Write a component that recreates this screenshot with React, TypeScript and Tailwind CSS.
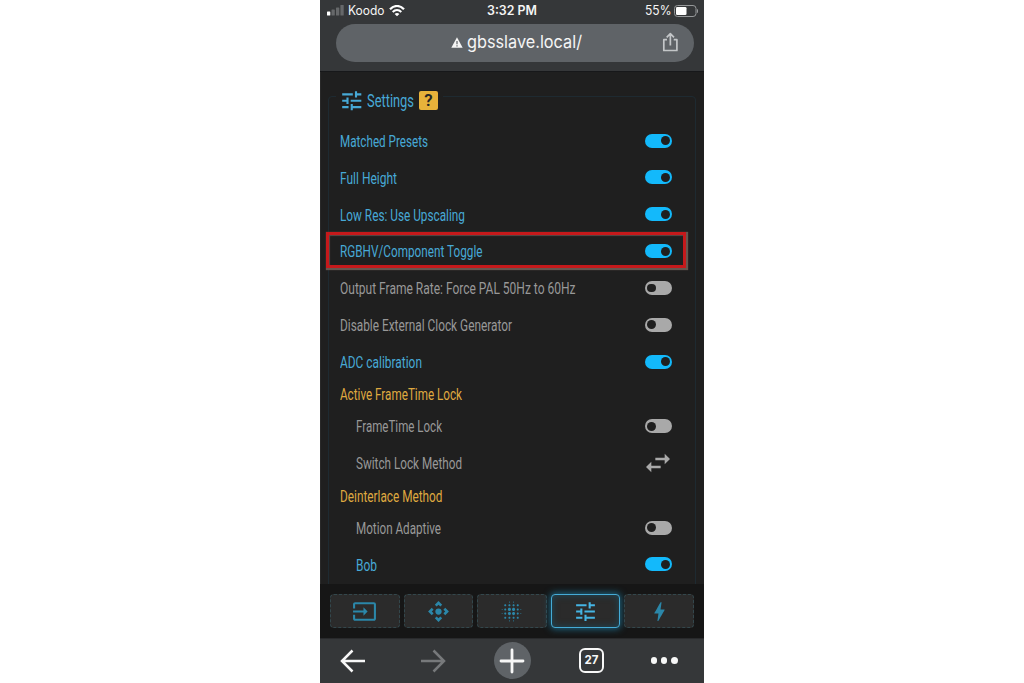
import { useLayoutEffect, useRef, useState } from "react";
import {
  MdBlurOn,
  MdBolt,
  MdInput,
  MdOutlineControlCamera,
  MdSwapHoriz,
  MdTune,
} from "react-icons/md";

/** Condenses a line of text to the given width. */
function Fit({ width, children, className = "" }: { width: number; children: string; className?: string }) {
  const ref = useRef<HTMLSpanElement>(null);
  const [scale, setScale] = useState(1);
  useLayoutEffect(() => {
    if (ref.current) setScale(width / ref.current.getBoundingClientRect().width * scale);
  }, [width]);
  return (
    <span className={`flex shrink-0 ${className}`} style={{ width }}>
      <span
        ref={ref}
        className="inline-block shrink-0 origin-left whitespace-nowrap"
        style={{ transform: `scaleX(${scale})` }}
      >
        {children}
      </span>
    </span>
  );
}

type Row = {
  label: string;
  width: number;
  kind: "on" | "off" | "swap" | "header";
  indent?: boolean;
  marked?: boolean;
};

const rows: Row[] = [
  { label: "Matched Presets", width: 88, kind: "on" },
  { label: "Full Height", width: 57, kind: "on" },
  { label: "Low Res: Use Upscaling", width: 125, kind: "on" },
  { label: "RGBHV/Component Toggle", width: 142.5, kind: "on", marked: true },
  { label: "Output Frame Rate: Force PAL 50Hz to 60Hz", width: 235.5, kind: "off" },
  { label: "Disable External Clock Generator", width: 172, kind: "off" },
  { label: "ADC calibration", width: 82, kind: "on" },
  { label: "Active FrameTime Lock", width: 122, kind: "header" },
  { label: "FrameTime Lock", width: 86, kind: "off", indent: true },
  { label: "Switch Lock Method", width: 106, kind: "swap", indent: true },
  { label: "Deinterlace Method", width: 102.5, kind: "header" },
  { label: "Motion Adaptive", width: 85, kind: "off", indent: true },
  { label: "Bob", width: 21, kind: "on", indent: true },
];

function Toggle({ on }: { on: boolean }) {
  return (
    <span
      className={`flex h-[14px] w-[27.6px] items-center rounded-full px-[2.6px] ${
        on ? "justify-end bg-[#13b9fb]" : "justify-start bg-[#a9a9a9]"
      }`}
    >
      <span className="size-[8.8px] rounded-full bg-[#1f1f1f]" />
    </span>
  );
}

function SettingRow({ row }: { row: Row }) {
  if (row.kind === "header") {
    return (
      <div className="flex h-[27.7px] shrink-0 items-center pl-[11px] text-[#dfa940]">
        <Fit width={row.width} className="pt-[2px]">{row.label}</Fit>
      </div>
    );
  }
  return (
    <div
      className={`relative flex h-[36.85px] shrink-0 items-center justify-between pr-[22.8px] ${
        row.indent ? "pl-[26.5px]" : "pl-[11px]"
      } ${row.kind === "on" ? "text-[#47a9d6]" : "text-[#989898]"}`}
    >
      <Fit width={row.width} className="pt-[2px]">{row.label}</Fit>
      {row.kind === "swap" ? (
        <MdSwapHoriz className="-mr-[2px] size-8 text-[#a9a9a9]" />
      ) : (
        <Toggle on={row.kind === "on"} />
      )}
      {row.marked && (
        <span className="absolute -top-px -left-[3px] h-[36.5px] w-[360px] border-[3px] border-[#c5191b] shadow-[1px_1px_1px_1px_#66564f,inset_1px_1px_1px_#594a48]" />
      )}
    </div>
  );
}

const tabs = [MdInput, MdOutlineControlCamera, MdBlurOn, MdTune, MdBolt];

export default function App() {
  return (
    <div className="flex h-[683px] w-[1024px] justify-center overflow-hidden bg-white">
      <div className="flex w-[384px] flex-col overflow-hidden bg-[#1f1f1f]">
        <header className="flex h-[72px] shrink-0 flex-col border-b border-[#17181a] bg-[#353739] font-['Inter','Liberation_Sans',sans-serif] text-[#f5f5f5]">
          <div className="grid h-[21px] shrink-0 grid-cols-3 items-center pr-[6px] pl-[6.5px] text-[12.5px] leading-[21px]">
            <div className="flex items-center">
              <svg width="17" height="11" viewBox="0 0 17 11">
                <rect x="0" y="6.5" width="3.3" height="4" rx=".6" fill="#fff" />
                <rect x="4.5" y="4.5" width="3.3" height="6" rx=".6" fill="#66686a" />
                <rect x="9" y="2.5" width="3.3" height="8" rx=".6" fill="#66686a" />
                <rect x="13.4" y="0" width="3.3" height="10.5" rx=".6" fill="#66686a" />
              </svg>
              <Fit width={36.5} className="ml-[4px]">Koodo</Fit>
              <svg className="ml-[5px]" width="16" height="12" viewBox="0 0 16 12" fill="none" stroke="#fff">
                <path d="M1 4.2C5-.1 11-.1 15 4.2" strokeWidth="2.2" />
                <path d="M3.700 7C6.200 4.400 9.800 4.400 12.300 7" strokeWidth="2" />
                <path d="M8 11.300 5.600 8.900C7 7.600 9 7.600 10.400 8.900Z" fill="#fff" stroke="none" />
              </svg>
            </div>
            <div className="flex justify-center font-semibold">
              <Fit width={50}>3:32 PM</Fit>
            </div>
            <div className="flex items-center justify-end">
              <Fit width={26.5} className="mr-[2px]">55%</Fit>
              <svg width="24.5" height="12" viewBox="0 0 24.5 12">
                <rect x=".5" y=".5" width="21.5" height="11" rx="3" fill="none" stroke="#96989a" />
                <rect x="2" y="2" width="10.5" height="8" rx="1.3" fill="#fff" />
                <path d="M23 4v4c1.800-.700 1.800-3.300 0-4" fill="#96989a" />
              </svg>
            </div>
          </div>
          <div className="mt-[3px] mr-[10.5px] ml-[16px] flex h-[37.5px] shrink-0 items-center rounded-full bg-[#5f6367] pr-[15px] pl-[114.5px] text-[17.5px]">
            <svg width="12" height="11" viewBox="0 0 12 11">
              <path d="M6 .3 11.7 10.7H.3Z" fill="#f5f5f5" />
              <path d="M6 4v3.200M6 8.200v1.300" stroke="#5f6367" strokeWidth="1.2" />
            </svg>
            <Fit width={115} className="ml-[4px] pb-[2px]">gbsslave.local/</Fit>
            <svg className="mb-[2px] ml-auto" width="17" height="20" viewBox="0 0 17 20" fill="none" stroke="#c3c6c8" strokeWidth="1.7">
              <path d="M5 7.700H1.800V18.500H14.900V7.700H11.700M8.350 13.500V2M4.700 5.300 8.350 1.700 12 5.300" strokeLinejoin="round" />
            </svg>
          </div>
        </header>

        <main className="flex h-[512px] shrink-0 flex-col overflow-hidden border-l border-[#292929] pr-2 pl-[7px] font-['Roboto','Open_Sans',sans-serif] text-[17px] font-normal">
          <fieldset className="mt-[18px] flex h-[520px] shrink-0 flex-col rounded-[4px] border border-[#1e2a31]">
            <legend className="ml-[7px] h-[13px] pr-[5px] pl-[3px] text-[#47a9d6]">
              <div className="flex h-[21px] items-center">
                <MdTune className="size-[25.5px] shrink-0" />
                <Fit width={47} className="ml-[2px] text-[19px] leading-[21px]">Settings</Fit>
                <span className="ml-[5.5px] flex size-[19px] items-center justify-center rounded-[2px] bg-[#e8b23a] text-[17px] leading-none font-semibold text-[#252525]">
                  ?
                </span>
              </div>
            </legend>
            <div className="mt-[19.2px] flex flex-col">
              {rows.map((row) => (
                <SettingRow key={row.label} row={row} />
              ))}
            </div>
          </fieldset>
        </main>

        <nav className="grid h-[54px] shrink-0 grid-cols-5 gap-[4px] bg-[#161616] px-[10px] py-[10px]">
          {tabs.map((Icon, i) => (
            <button
              key={i}
              className={`flex items-center justify-center rounded-[4px] bg-[#2b2b2b] ${
                i === 3
                  ? "border-[1.5px] border-[#45abd6] text-[#45b5e4] shadow-[0_0_7px_1px_#1d6785,inset_0_0_7px_#1b4b5d]"
                  : "border border-dashed border-[#33474c] text-[#2b87a9]"
              }`}
            >
              <Icon className="size-[25px]" />
            </button>
          ))}
        </nav>

        <footer className="flex h-[45px] shrink-0 items-center border-t border-[#292a2c] bg-[#353739] pb-px pl-[20px]">
          <svg width="26" height="24" viewBox="0 0 26 24" fill="none" stroke="#f7f7f7" strokeWidth="2.5">
            <path d="M25 12H2.500M12.500 1.500 2 12 12.500 22.500" />
          </svg>
          <svg className="ml-[53.5px]" width="26" height="24" viewBox="0 0 26 24" fill="none" stroke="#77797b" strokeWidth="2.5">
            <path d="M1 12H23.500M13.500 1.500 24 12 13.500 22.500" />
          </svg>
          <span className="ml-[48px] flex size-[37px] items-center justify-center rounded-full bg-[#5f6367]">
            <svg width="26" height="26" viewBox="0 0 26 26" stroke="#f7f7f7" strokeWidth="2.8" strokeLinecap="round">
              <path d="M2 13H24M13 2V24" />
            </svg>
          </span>
          <span className="ml-[48.5px] flex size-[25px] items-center justify-center rounded-[6px] border-[2.5px] border-[#f7f7f7] font-['Inter'] text-[11.5px] leading-none font-bold text-[#f7f7f7]">
            27
          </span>
          <span className="ml-[46.500px] flex gap-[3.7px]">
            <i className="size-[6.6px] rounded-full bg-[#f7f7f7]" />
            <i className="size-[6.6px] rounded-full bg-[#f7f7f7]" />
            <i className="size-[6.6px] rounded-full bg-[#f7f7f7]" />
          </span>
        </footer>
      </div>
    </div>
  );
}
